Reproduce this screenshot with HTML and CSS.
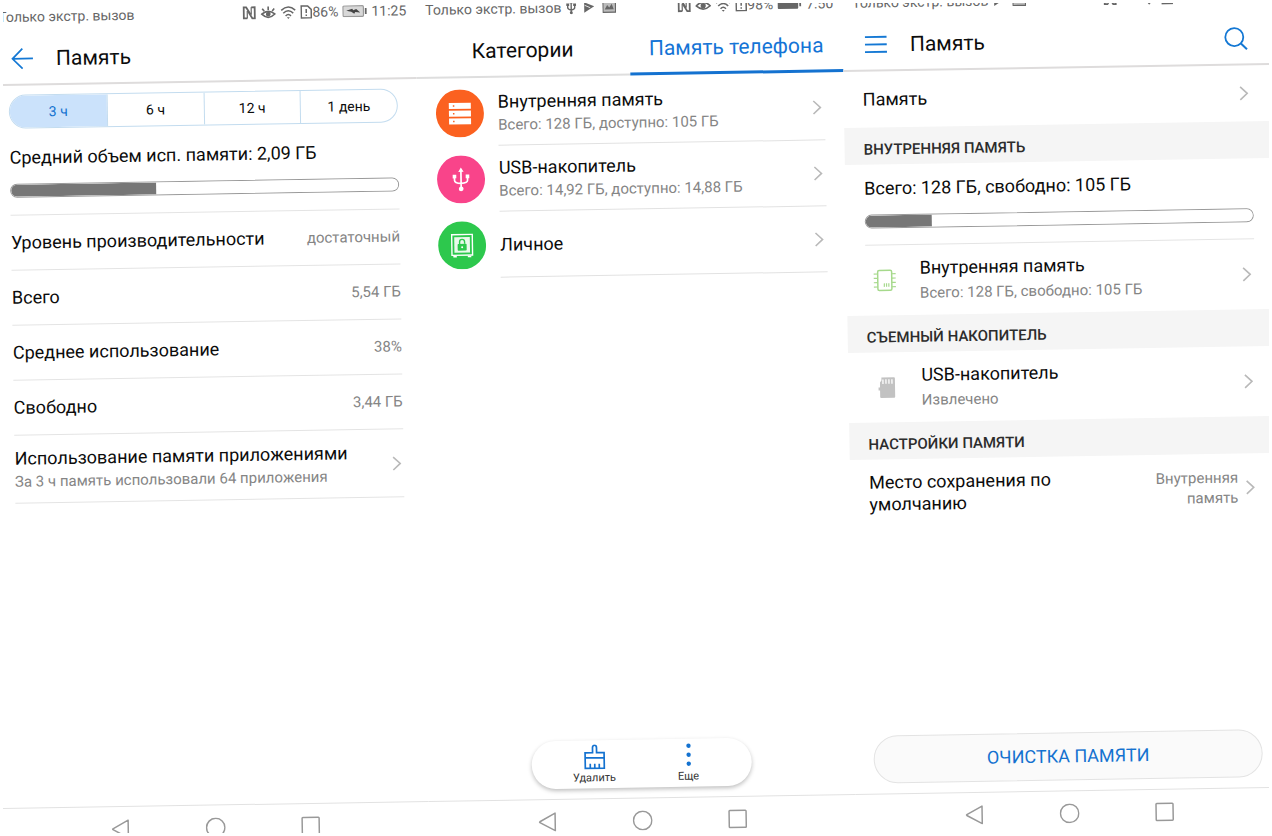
FILE: index.html
```html
<!DOCTYPE html>
<html lang="ru">
<head>
<meta charset="utf-8">
<meta name="viewport" content="width=device-width, initial-scale=1">
<title>Память</title>
<link rel="stylesheet" href="styles.css">
</head>
<body>
<svg class="defs" aria-hidden="true">
  <symbol id="chevron" viewBox="0 0 10 16"><path d="M1.500 1.500 8.500 8l-7 6.500" fill="none" stroke="currentColor" stroke-width="1.600"/></symbol>
  <symbol id="nfc" viewBox="0 0 14 14"><path d="M5 12.500H1.500V1.500H4L8.500 9M9 1.500h3.500v11H10L5.500 5" fill="none" stroke="currentColor" stroke-width="1.800"/><path d="M5 5v7.500M9 1.500V9" stroke="currentColor" stroke-width="1.200"/></symbol>
  <symbol id="eye" viewBox="0 0 16 14"><path d="M1 7.500Q8 .5 15 7.500 8 14 1 7.500z" fill="none" stroke="currentColor" stroke-width="1.600"/><circle cx="8" cy="7.300" r="2.600" fill="currentColor"/></symbol>
  <symbol id="eye-lash" viewBox="0 0 16 14"><path d="M1.500 8.500Q8 3 14.500 8.500 8 15 1.500 8.500zM8 4.500V1M4 5.500 2 3M12 5.500 14 3" fill="none" stroke="currentColor" stroke-width="1.600"/><circle cx="8" cy="8.600" r="2.400" fill="currentColor"/></symbol>
  <symbol id="wifi" viewBox="0 0 16 14"><path d="M1 5Q8-1.500 15 5M3 8Q8 3 13 8M5.300 10.700Q8 8 10.700 10.700" fill="none" stroke="currentColor" stroke-width="1.500"/><path d="M6.500 12h3L8 13.700z" fill="currentColor"/></symbol>
  <symbol id="sim" viewBox="0 0 12 14"><path d="M1 1h6.500L11 4.500V13H1z" fill="none" stroke="currentColor" stroke-width="1.500"/><path d="M6 4v4M6 9.500v1.500" stroke="currentColor" stroke-width="1.500"/></symbol>
  <symbol id="battery-charge" viewBox="0 0 25 12"><rect x=".7" y=".7" width="20.500" height="10.600" rx="1" fill="#d8d8d8" stroke="#999" stroke-width="1.200"/><path d="M4 5.500 10 3.500l1 1.500 3-1 4 3.500-5-.5-1 1.500-3-2z" fill="#444"/><path d="M23.500 3v6" stroke="currentColor" stroke-width="1.800"/></symbol>
  <symbol id="battery" viewBox="0 0 25 12"><rect x=".5" y="1" width="20.500" height="10" rx="1" fill="currentColor"/><path d="M23 3.500v5" stroke="currentColor" stroke-width="1.800"/></symbol>
  <symbol id="usb-small" viewBox="0 0 10 14"><path d="M5 2v10M1.500 4v3Q1.500 9 5 9.500 8.500 9 8.500 7V4" fill="none" stroke="currentColor" stroke-width="1.400"/><path d="M5 0l2 2.800H3zM0 3h3v2.500H0zM7 3h3v2.500H7z" fill="currentColor"/><circle cx="5" cy="12.300" r="1.500" fill="currentColor"/></symbol>
  <symbol id="play" viewBox="0 0 12 12"><path d="M1 1 11 5 1 11.500z" fill="currentColor"/><path d="M1.500 4 7 6.500" stroke="#fff" stroke-width=".8"/></symbol>
  <symbol id="picture" viewBox="0 0 14 12"><rect x=".7" y=".7" width="12.600" height="10.600" fill="#bbb" stroke="currentColor" stroke-width="1.200"/><path d="M2.500 8.500 5 4l2 2.500L9.500 3l2 5.500z" fill="currentColor"/></symbol>
  <symbol id="nav-back" viewBox="0 0 18 20"><path d="M16.500 1.200v17.600L1.200 10.400q-.6-.4 0-.8z" fill="none" stroke="currentColor" stroke-width="1.500" stroke-linejoin="round"/></symbol>
  <symbol id="nav-home" viewBox="0 0 20 20"><circle cx="10" cy="10" r="9.200" fill="none" stroke="currentColor" stroke-width="1.500"/></symbol>
  <symbol id="nav-recent" viewBox="0 0 20 20"><rect x="1.500" y="1.500" width="17" height="17" rx=".8" fill="none" stroke="currentColor" stroke-width="1.500"/></symbol>
</svg>

<div class="frame">
<main class="sheet">

  <section class="panel">
    <div class="status">
      <span>Только экстр. вызов</span>
      <span class="status-right">
        <svg class="i14"><use href="#nfc"/></svg>
        <svg class="i16"><use href="#eye-lash"/></svg>
        <svg class="i16"><use href="#wifi"/></svg>
        <span class="pair"><svg class="i12"><use href="#sim"/></svg>86%</span>
        <svg class="i25"><use href="#battery-charge"/></svg>
        <span>11:25</span>
      </span>
    </div>
    <header class="bar">
      <button class="icon-btn" aria-label="Назад"><svg width="22" height="22" viewBox="0 0 22 22"><path d="M22 11H1.500M11.500 1 1.500 11l10 10" fill="none" stroke="currentColor" stroke-width="1.700"/></svg></button>
      <h1>Память</h1>
    </header>
    <div class="content">
      <div class="segments">
        <button class="segment active">3 ч</button><button class="segment">6 ч</button><button class="segment">12 ч</button><button class="segment">1 день</button>
      </div>
      <div class="usage usage-top">
        <label for="avg">Средний объем исп. памяти: 2,09 ГБ</label>
        <progress id="avg" max="1000" value="374"></progress>
      </div>
      <dl class="facts">
        <div><dt>Уровень производительности</dt><dd>достаточный</dd></div>
        <div><dt>Всего</dt><dd>5,54 ГБ</dd></div>
        <div><dt>Среднее использование</dt><dd>38%</dd></div>
        <div><dt>Свободно</dt><dd>3,44 ГБ</dd></div>
      </dl>
      <a class="row apps" href="#apps">
        <span class="text"><span class="title">Использование памяти приложениями</span><span class="sub">За 3 ч память использовали 64 приложения</span></span>
        <svg class="chevron"><use href="#chevron"/></svg>
      </a>
    </div>
    <nav class="nav"><button aria-label="Назад"><svg><use href="#nav-back"/></svg></button><button aria-label="Домой"><svg><use href="#nav-home"/></svg></button><button aria-label="Недавние"><svg><use href="#nav-recent"/></svg></button></nav>
  </section>

  <section class="panel">
    <div class="status">
      <span class="status-left">Только экстр. вызов
        <span class="notes"><svg class="i10"><use href="#usb-small"/></svg><svg class="i12"><use href="#play"/></svg><svg class="i14"><use href="#picture"/></svg></span>
      </span>
      <span class="status-right">
        <svg class="i14"><use href="#nfc"/></svg>
        <svg class="i16"><use href="#eye"/></svg>
        <svg class="i16"><use href="#wifi"/></svg>
        <span class="pair"><svg class="i12"><use href="#sim"/></svg>98%</span>
        <svg class="i25"><use href="#battery"/></svg>
        <span>7:50</span>
      </span>
    </div>
    <div class="tabs">
      <button class="tab">Категории</button>
      <button class="tab active">Память телефона</button>
    </div>
    <div class="content list">
      <a class="row store" href="#internal">
        <svg class="disc" viewBox="0 0 48 48"><circle cx="24" cy="24" r="24" fill="#fb6120"/><path d="M13 13.500h22v6H13zM13 21.200h22v6H13zM13 29h22v6H13z" fill="#fff"/><path d="M17 16.500h1.500M17 24.200h1.500M17 32h1.500" stroke="#fb6120" stroke-width="1.500"/></svg>
        <span class="cell"><span class="text"><span class="title">Внутренняя память</span><span class="sub">Всего: 128 ГБ, доступно: 105 ГБ</span></span><svg class="chevron"><use href="#chevron"/></svg></span>
      </a>
      <a class="row store" href="#usb">
        <svg class="disc" viewBox="0 0 48 48"><circle cx="24" cy="24" r="24" fill="#f9448a"/><path d="M24 15v18M17.500 21.500V25q0 2.800 6.500 3 6.500-.2 6.500-3v-3.500" fill="none" stroke="#fff" stroke-width="1.700"/><path d="M24 12.200l2.700 4.300h-5.400zM15.700 19.300h3.600v3.600h-3.600zM28.700 19.300h3.600v3.600h-3.600z" fill="#fff"/><circle cx="24" cy="33.500" r="2.400" fill="#fff"/></svg>
        <span class="cell"><span class="text"><span class="title">USB-накопитель</span><span class="sub">Всего: 14,92 ГБ, доступно: 14,88 ГБ</span></span><svg class="chevron"><use href="#chevron"/></svg></span>
      </a>
      <a class="row store" href="#private">
        <svg class="disc" viewBox="0 0 48 48"><circle cx="24" cy="24" r="24" fill="#2dc84d"/><rect x="13.700" y="13.200" width="20.600" height="20.600" fill="none" stroke="#fff" stroke-width="1.400"/><rect x="16.200" y="15.700" width="15.600" height="15.600" fill="#e9f9ec"/><path d="M15 34.500h3.500v1.500H15zM29.500 34.500H33v1.500h-3.500z" fill="#fff"/><rect x="19.500" y="22.500" width="9" height="6.800" rx=".8" fill="#2dc84d"/><path d="M21.500 22.500V20.500a2.500 2.500 0 0 1 5 0v2" fill="none" stroke="#2dc84d" stroke-width="1.400"/><circle cx="24" cy="25.800" r="1" fill="#fff"/></svg>
        <span class="cell"><span class="text"><span class="title">Личное</span></span><svg class="chevron"><use href="#chevron"/></svg></span>
      </a>
      <div class="actions">
        <button><svg width="24" height="26" viewBox="0 0 24 26"><path d="M10 8.500V3.500Q10 1 12 1t2 2.500v5h7.500v15.500h-19V8.500zM2.500 13.500h19M7.500 24v-4.500M12 24v-4.500M16.500 24v-4.500" fill="none" stroke="currentColor" stroke-width="1.700"/></svg><span>Удалить</span></button>
        <button><svg width="24" height="26" viewBox="0 0 24 26"><circle cx="12" cy="3" r="2.200" fill="currentColor"/><circle cx="12" cy="12" r="2.200" fill="currentColor"/><circle cx="12" cy="21" r="2.200" fill="currentColor"/></svg><span>Еще</span></button>
      </div>
    </div>
    <nav class="nav"><button aria-label="Назад"><svg><use href="#nav-back"/></svg></button><button aria-label="Домой"><svg><use href="#nav-home"/></svg></button><button aria-label="Недавние"><svg><use href="#nav-recent"/></svg></button></nav>
  </section>

  <section class="panel">
    <div class="status">
      <span class="status-left">Только экстр. вызов
        <span class="notes"><svg class="i12"><use href="#play"/></svg><svg class="i14"><use href="#picture"/></svg></span>
      </span>
      <span class="status-right">
        <svg class="i14"><use href="#nfc"/></svg>
        <svg class="i16"><use href="#eye"/></svg>
        <svg class="i16"><use href="#wifi"/></svg>
        <svg class="i12"><use href="#sim"/></svg>
        <svg class="i25"><use href="#battery"/></svg>
        <svg class="i25"><use href="#battery"/></svg>
        <svg class="i25"><use href="#battery"/></svg>
      </span>
    </div>
    <header class="bar">
      <button class="icon-btn" aria-label="Меню"><svg width="22" height="22" viewBox="0 0 22 22"><path d="M0 3.500h22M0 11h22M0 18.500h22" stroke="currentColor" stroke-width="1.900"/></svg></button>
      <h1>Память</h1>
      <button class="icon-btn push" aria-label="Поиск"><svg width="24" height="24" viewBox="0 0 24 24"><circle cx="10.500" cy="10.500" r="9" fill="none" stroke="currentColor" stroke-width="1.800"/><path d="M17 17l6 6" stroke="currentColor" stroke-width="2"/></svg></button>
    </header>
    <div class="content flush">
      <a class="row single" href="#memory"><span class="text"><span class="title">Память</span></span><svg class="chevron"><use href="#chevron"/></svg></a>
      <h2 class="band">ВНУТРЕННЯЯ ПАМЯТЬ</h2>
      <div class="inset">
        <div class="usage">
          <label for="disk">Всего: 128 ГБ, свободно: 105 ГБ</label>
          <progress id="disk" max="1000" value="170"></progress>
        </div>
      </div>
      <a class="row device" href="#internal-storage">
        <svg class="chip" viewBox="0 0 24 24"><rect x="5" y="2" width="14" height="20" rx="1.500" fill="none" stroke="currentColor" stroke-width="1.500"/><path d="M1 5.500h4M1 9.800h4M1 14.200h4M1 18.500h4M19 5.500h4M19 9.800h4M19 14.200h4M19 18.500h4M11.500 15v3.500M13.700 15v3.500M16 15v3.500" stroke="currentColor" stroke-width="1.200"/></svg>
        <span class="text loose"><span class="title">Внутренняя память</span><span class="sub">Всего: 128 ГБ, свободно: 105 ГБ</span></span>
        <svg class="chevron"><use href="#chevron"/></svg>
      </a>
      <h2 class="band">СЪЕМНЫЙ НАКОПИТЕЛЬ</h2>
      <a class="row device" href="#usb-storage">
        <svg class="card" viewBox="0 0 24 24"><path d="M7 2h12.500q1 0 1 1v18.500q0 1-1 1h-13q-1 0-1-1v-6.500H4v-3h1.500V7L7 5z" fill="#c2c2c2"/><path d="M8.500 4v4.500M11.500 4v4.500M14.500 4v4.500M17.500 4v4.500" stroke="#fff" stroke-width="1.300"/></svg>
        <span class="text loose"><span class="title">USB-накопитель</span><span class="sub">Извлечено</span></span>
        <svg class="chevron"><use href="#chevron"/></svg>
      </a>
      <h2 class="band">НАСТРОЙКИ ПАМЯТИ</h2>
      <a class="row default" href="#default">
        <span class="title wrap">Место сохранения по умолчанию</span>
        <span class="sub value">Внутренняя память</span>
        <svg class="chevron"><use href="#chevron"/></svg>
      </a>
      <div class="foot"><button class="clean">ОЧИСТКА ПАМЯТИ</button></div>
    </div>
    <nav class="nav"><button aria-label="Назад"><svg><use href="#nav-back"/></svg></button><button aria-label="Домой"><svg><use href="#nav-home"/></svg></button><button aria-label="Недавние"><svg><use href="#nav-recent"/></svg></button></nav>
  </section>

</main>
</div>
</body>
</html>
```

FILE: styles.css
```css
* { box-sizing: border-box; }

body {
  margin: 0;
  background: #fff;
  color: #0c0c0c;
  font-family: Roboto, "Noto Sans", sans-serif;
  font-size: 18px;
  line-height: 22px;
}

h1, h2, dl, dt, dd { margin: 0; font-weight: 400; }
button { margin: 0; padding: 0; border: 0; background: none; font: inherit; color: inherit; }
a { color: inherit; text-decoration: none; }
svg { display: block; flex: none; }
.defs { position: absolute; width: 0; height: 0; }

/* The three screens lie on one slightly tilted sheet, cropped by the frame. */
.frame {
  height: 100vh;
  border: 3px solid #fff;
  overflow: hidden;
}

.sheet {
  display: grid;
  grid-template-columns: repeat(3, 1fr);
  width: calc(100% + 15px);
  height: calc(100vh + 17px);
  margin: -3px 0 0 -15px;
  transform: rotate(-0.95deg);
  transform-origin: 12px 0;
}

.panel { display: flex; flex-direction: column; min-width: 0; }

/* Status bar */
.status {
  display: flex;
  justify-content: space-between;
  align-items: center;
  height: 34px;
  padding: 0 9px 0 10px;
  color: #666;
  font-size: 14px;
  white-space: nowrap;
}
.status-left, .status-right, .notes, .pair { display: flex; align-items: center; }
.status-left { gap: 5px; }
.notes { gap: 7px; }
.status-right { gap: 4px; }
.i10 { width: 10px; height: 14px; }
.i12 { width: 12px; height: 14px; }
.i14 { width: 14px; height: 14px; }
.i16 { width: 16px; height: 14px; }
.i25 { width: 25px; height: 12px; }

/* Title bar and tabs */
.bar {
  display: flex;
  align-items: center;
  height: 52px;
  padding: 0 22px;
  border-bottom: 2px solid #dedcdc;
}
.bar h1 { margin-left: 23px; font-size: 21px; line-height: 28px; }
.icon-btn { color: #1478d4; }
.push { margin-left: auto; }

.tabs { display: grid; grid-template-columns: 1fr 1fr; height: 52px; }
.tab { border-bottom: 2px solid #dedede; font-size: 21px; line-height: 28px; }
.tab.active { border-bottom: 3px solid #1472d0; color: #1474d6; }

/* Body */
.content { display: flex; flex: 1; flex-direction: column; padding: 1px 19px 0; }
.list { padding-top: 2px; }
.flush { padding: 0; }
.inset { padding: 0 19px; }

.segments {
  display: grid;
  grid-template-columns: repeat(4, 1fr);
  height: 34px;
  margin-top: 8px;
  border: 1px solid #c3dcef;
  border-radius: 17px;
  overflow: hidden;
  font-size: 14px;
}
.segment + .segment { border-left: 1px solid #c3dcef; }
.segment.active { background: #cbe2fb; color: #1472d0; }

.usage { display: flex; flex-direction: column; gap: 15px; padding: 13px 0 16px; border-bottom: 1px solid #e4e4e4; }
.usage-top { padding: 18px 0 17px; }

progress {
  appearance: none;
  display: block;
  width: 100%;
  height: 14px;
  border: 1px solid #9a9a9a;
  border-radius: 7px;
  background: #fff;
  overflow: hidden;
}
progress::-webkit-progress-bar { background: #fff; }
progress::-webkit-progress-value { background: #777; }

.facts div {
  display: flex;
  justify-content: space-between;
  align-items: center;
  height: 55px;
  border-bottom: 1px solid #e4e4e4;
}
.facts dd, .sub { color: #858585; font-size: 15px; line-height: 20px; }

.row { display: flex; align-items: center; justify-content: space-between; }
.apps { height: 68px; padding-right: 2px; border-bottom: 1px solid #e4e4e4; }
.text { display: flex; flex-direction: column; gap: 2px; }
.loose { gap: 4px; margin-right: auto; }
.chevron { width: 10px; height: 16px; color: #b9b9b9; }

.store { gap: 14px; height: 66px; }
.disc { width: 48px; height: 48px; }
.cell {
  display: flex;
  flex: 1;
  align-items: center;
  justify-content: space-between;
  height: 66px;
  padding-right: 3px;
  border-bottom: 1px solid #e2e2e2;
}

.single { height: 56px; padding: 0 22px 0 19px; }
.band {
  height: 37px;
  padding: 11px 19px 0;
  background: #f5f5f5;
  color: #2c2c2c;
  font-size: 15px;
  font-weight: 500;
  line-height: 22px;
}
.device { height: 70px; padding: 0 22px 1px 26px; gap: 23px; }
.chip, .card { width: 24px; height: 24px; }
.chip { color: #a6d98c; }
.default { height: 68px; padding: 0 22px 0 19px; gap: 7px; }
.wrap { width: 200px; margin-right: auto; }
.value { width: 100px; text-align: right; }

/* Bottom controls */
.actions {
  display: flex;
  align-self: center;
  width: 220px;
  height: 48px;
  margin-top: auto;
  margin-bottom: 10px;
  padding: 0 16px;
  border-radius: 24px;
  background: #fff;
  box-shadow: 0 2px 4px rgba(0, 0, 0, 0.25);
}
.actions button { display: flex; flex: 1; flex-direction: column; align-items: center; padding-top: 4px; color: #1472d0; }
.actions span { color: #333; font-size: 11px; line-height: 16px; }

.foot { margin-top: auto; padding: 0 19px 10px; }
.clean {
  width: 100%;
  height: 48px;
  border: 1px solid #e3e3e3;
  border-radius: 24px;
  background: #fafafa;
  color: #1472d0;
}

.nav {
  display: flex;
  align-items: center;
  justify-content: center;
  gap: 75px;
  height: 45px;
  border-top: 1px solid #e2e2e2;
  color: #999;
}
.nav svg { width: 20px; height: 20px; }
```
